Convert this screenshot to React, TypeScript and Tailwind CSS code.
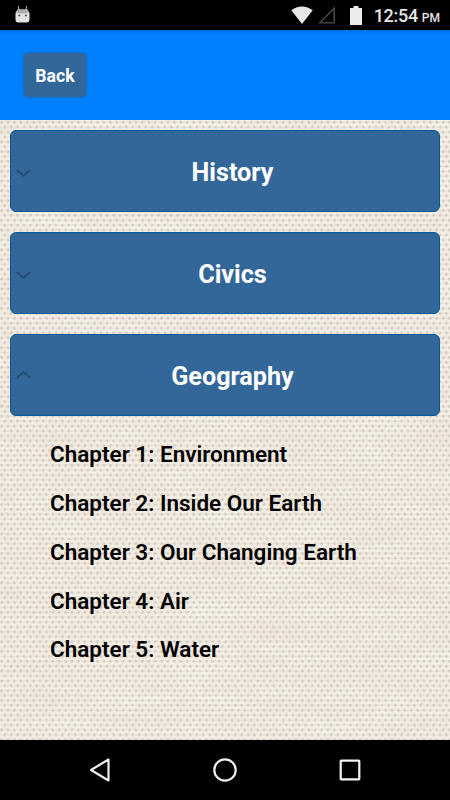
type Section = {
  title: string;
  chapters: string[];
  open?: boolean;
};

const sections: Section[] = [
  { title: 'History', chapters: [] },
  { title: 'Civics', chapters: [] },
  {
    title: 'Geography',
    open: true,
    chapters: [
      'Chapter 1: Environment',
      'Chapter 2: Inside Our Earth',
      'Chapter 3: Our Changing Earth',
      'Chapter 4: Air',
      'Chapter 5: Water',
    ],
  },
];

function StatusBar() {
  return (
    <div className="flex h-[30px] shrink-0 items-center bg-black pr-[10px] pl-[14px] text-[#e6e6e6]">
      <svg width="17" height="18" viewBox="0 0 17 18" className="mt-[-3px]">
        <path d="M4.2 1 5.2 5M12.8 1 11.8 5" stroke="#999" strokeWidth="1.2" fill="none" />
        <path d="M3.5 4.5h10l2 3.5v6.5a3 3 0 0 1-3 3h-8a3 3 0 0 1-3-3V8z" fill="#e2e2e2" />
        <path d="M4 4.5h9l2 3c-4 1.2-9 1.2-13 0z" fill="#ababab" />
        <circle cx="5.3" cy="10.5" r="1.1" fill="#555" />
        <circle cx="12" cy="10.5" r="1.1" fill="#555" />
      </svg>
      <div className="ml-auto flex items-center">
        <svg width="22" height="18" viewBox="0 0 22 18">
          <path d="M.3 4.3C6.5-.8 15.5-.8 21.7 4.3L11 18z" fill="#e8e8e8" />
        </svg>
        <svg width="18" height="18" viewBox="0 0 18 18" className="ml-[5px]">
          <path d="M16.2 2.2V16.8H1.8z" fill="none" stroke="#444" strokeWidth="1.6" />
        </svg>
        <svg width="12" height="19" viewBox="0 0 12 19" className="ml-[14px]">
          <path d="M3.5 0h5v2H12v17H0V2h3.5z" fill="#ececec" />
        </svg>
        <div className="ml-[12px] flex items-baseline pt-[2px] font-medium">
          <span className="text-[18px] leading-[28px] tracking-[-0.3px]">12:54</span>
          <span className="ml-[4px] text-[12px]">PM</span>
        </div>
      </div>
    </div>
  );
}

function Linen() {
  return (
    <svg className="absolute inset-0 h-full w-full" aria-hidden="true">
      <defs>
        <pattern id="weave" width="6.4" height="9.8" patternUnits="userSpaceOnUse">
          <path d="M0 2.2h6.4M0 7.1h6.4" stroke="#ebe4da" strokeWidth="1.4" />
          <ellipse cx="1.6" cy="2.2" rx="1.2" ry="1.5" fill="#cfc8be" />
          <ellipse cx="4.8" cy="7.1" rx="1.2" ry="1.5" fill="#cfc8be" />
        </pattern>
        <filter id="fibre" x="0" y="0" width="100%" height="100%" colorInterpolationFilters="sRGB">
          <feTurbulence type="fractalNoise" baseFrequency="0.012 0.06" numOctaves="3" seed="4" />
          <feColorMatrix values="0 0 0 0 0.93  0 0 0 0 0.87  0 0 0 0 0.83  0.8 0 0 0 -0.2" />
        </filter>
        <filter id="soften" x="0" y="0" width="100%" height="100%" colorInterpolationFilters="sRGB">
          <feTurbulence type="fractalNoise" baseFrequency="0.1" numOctaves="2" seed="7" result="noise" />
          <feDisplacementMap in="SourceGraphic" in2="noise" scale="1.5" xChannelSelector="R" yChannelSelector="G" />
          <feGaussianBlur stdDeviation="0.7" />
        </filter>
      </defs>
      <rect width="100%" height="100%" fill="#f5f0e6" />
      <rect width="100%" height="100%" filter="url(#fibre)" />
      <rect x="-5" y="-5" width="460" height="640" fill="url(#weave)" filter="url(#soften)" />
    </svg>
  );
}

function SectionPanel({ title, chapters, open }: Section) {
  return (
    <section>
      <button className="grid h-[82px] w-full grid-cols-[14px_1fr] items-center rounded-[6px] border border-[#005c99] bg-[#336699] pr-[4px] pl-[5px] text-white">
        <svg width="15" height="8" viewBox="0 0 15 8" className={open ? 'mt-[-1px]' : 'mt-[3px]'}>
          <path d={open ? 'M.8 7 7.5 1.2 14.2 7' : 'M.8 1 7.5 6.8 14.2 1'} fill="none" stroke="#234a73" strokeWidth="1.7" />
        </svg>
        <span className="pt-[4px] text-[25.2px] leading-[30px] font-bold">{title}</span>
      </button>
      {open && (
        <ul className="pt-[14.2px] pl-10 text-[22.5px] leading-[48.8px] font-semibold text-black">
          {chapters.map((chapter) => (
            <li key={chapter}>{chapter}</li>
          ))}
        </ul>
      )}
    </section>
  );
}

function NavigationBar() {
  return (
    <nav className="flex h-[60px] shrink-0 items-center justify-center gap-[101px] bg-black">
      <svg width="24" height="26" viewBox="0 0 24 26" fill="none" stroke="#eee" strokeWidth="2.2" strokeLinejoin="round">
        <path d="M20.5 2.5v21L3 13z" />
      </svg>
      <svg width="24" height="24" viewBox="0 0 24 24" fill="none" stroke="#eee" strokeWidth="2.2">
        <circle cx="12" cy="12" r="10.7" />
      </svg>
      <svg width="24" height="24" viewBox="0 0 24 24" fill="none" stroke="#f4f4f4" strokeWidth="2.2" strokeLinejoin="round">
        <rect x="2.7" y="2.7" width="18.6" height="18.6" rx=".5" />
      </svg>
    </nav>
  );
}

export default function App() {
  return (
    <div className="flex h-[800px] w-[450px] flex-col overflow-hidden font-['Roboto',sans-serif]">
      <StatusBar />
      <header className="flex h-[90px] shrink-0 items-center bg-[#0080ff] bg-[linear-gradient(#0070df,#0080ff_4px)] pl-6">
        <button className="h-[44px] w-[62px] rounded-[4px] bg-[#336699] pt-[2px] text-[17.7px] leading-[27px] font-bold text-white shadow-[0_0_3px_#245c94]">
          Back
        </button>
      </header>
      <main className="relative flex-1 overflow-hidden">
        <Linen />
        <div className="relative flex flex-col gap-5 p-[10px]">
          {sections.map((section) => (
            <SectionPanel key={section.title} {...section} />
          ))}
        </div>
      </main>
      <NavigationBar />
    </div>
  );
}
